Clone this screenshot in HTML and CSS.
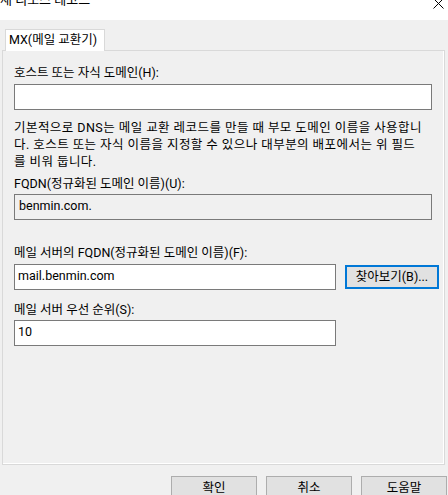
FILE: index.html
```html
<!DOCTYPE html>
<html lang="ko">
<head>
<meta charset="utf-8">
<title>새 리소스 레코드</title>
<link rel="stylesheet" href="styles.css">
</head>
<body>
<div class="titlebar">
  <span class="title">새 리소스 레코드</span>
  <svg class="close" width="11" height="11" viewBox="0 0 11 11"><path d="M0.5 0.5 L10.5 10.5 M10.5 0.5 L0.5 10.5" stroke="#000" stroke-width="1" fill="none"/></svg>
</div>
<div class="tabs">
  <div class="tab">MX(메일 교환기)</div>
</div>
<div class="panel">
  <div class="label l1">호스트 또는 자식 도메인(H):</div>
  <div class="field full"></div>
  <div class="desc">기본적으로 DNS는 메일 교환 레코드를 만들 때 부모 도메인 이름을 사용합니<br>다. 호스트 또는 자식 이름을 지정할 수 있으나 대부분의 배포에서는 위 필드<br>를 비워 둡니다.</div>
  <div class="label l2">FQDN(정규화된 도메인 이름)(U):</div>
  <div class="field full readonly">benmin.com.</div>
  <div class="label l3">메일 서버의 FQDN(정규화된 도메인 이름)(F):</div>
  <div class="row">
    <div class="field short">mail.benmin.com</div>
    <div class="btn browse">찾아보기(B)...</div>
  </div>
  <div class="label l4">메일 서버 우선 순위(S):</div>
  <div class="field short">10</div>
</div>
<div class="buttons">
  <div class="btn dlg">확인</div>
  <div class="btn dlg">취소</div>
  <div class="btn dlg">도움말</div>
</div>
</body>
</html>
```

FILE: styles.css
```css
html, body {
  margin: 0;
  padding: 0;
}
body {
  width: 448px;
  height: 495px;
  overflow: hidden;
  background: #f0f0f0;
  font-family: Roboto, "Noto Sans CJK KR", sans-serif;
  font-size: 12.5px;
  color: #000;
}
.titlebar {
  height: 20px;
  background: #fff;
  display: flex;
  justify-content: space-between;
  align-items: flex-start;
  overflow: hidden;
}
.title {
  font-size: 13px;
  line-height: 16px;
  margin-top: -8px;
  margin-left: 0;
}
.close {
  margin-top: -2px;
  margin-right: 4px;
}
.tabs {
  height: 30px;
  display: flex;
  align-items: flex-end;
  padding-left: 5px;
}
.tab {
  box-sizing: border-box;
  width: 100px;
  height: 22px;
  border: 1px solid #d9d9d9;
  border-bottom: none;
  background: #fff;
  padding-left: 3px;
  line-height: 20px;
  position: relative;
  z-index: 1;
  margin-bottom: -1px;
  white-space: nowrap;
}
.panel {
  box-sizing: border-box;
  margin: 0 3px 0 2px;
  height: 415px;
  border: 1px solid #d9d9d9;
  box-shadow: inset -1px -1px 0 #fff;
  padding: 14px 13px 0 11px;
}
.label {
  line-height: 16px;
  height: 16px;
  white-space: nowrap;
}
.l1 { margin-bottom: 3px; }
.l2 { margin-top: 6px; margin-bottom: 2px; }
.l3 { margin-top: 25px; margin-bottom: 3px; }
.l4 { margin-top: 12px; margin-bottom: 2px; }
.field {
  box-sizing: border-box;
  height: 26px;
  border: 1px solid #7a7a7a;
  background: #fff;
  padding: 3px 3px 0 3px;
  line-height: 16px;
  white-space: nowrap;
}
.full { width: 418px; }
.short { width: 322px; flex-shrink: 0; }
.readonly {
  background: #f0f0f0;
  padding-left: 4px;
}
.desc {
  margin-top: 9px;
  line-height: 17px;
  letter-spacing: 0.45px;
  white-space: nowrap;
}
.row {
  display: flex;
  align-items: flex-start;
}
.btn {
  box-sizing: border-box;
  background: #e1e1e1;
  border: 1px solid #adadad;
  text-align: center;
  white-space: nowrap;
}
.browse {
  flex-shrink: 0;
  margin-left: 9px;
  margin-top: 1px;
  width: 94px;
  height: 24px;
  border: 2px solid #0078d7;
  line-height: 20px;
}
.buttons {
  display: flex;
  justify-content: flex-end;
  gap: 9px;
  padding-right: 1px;
  margin-top: 11px;
}
.dlg {
  width: 86px;
  height: 23px;
  line-height: 21px;
}
```
